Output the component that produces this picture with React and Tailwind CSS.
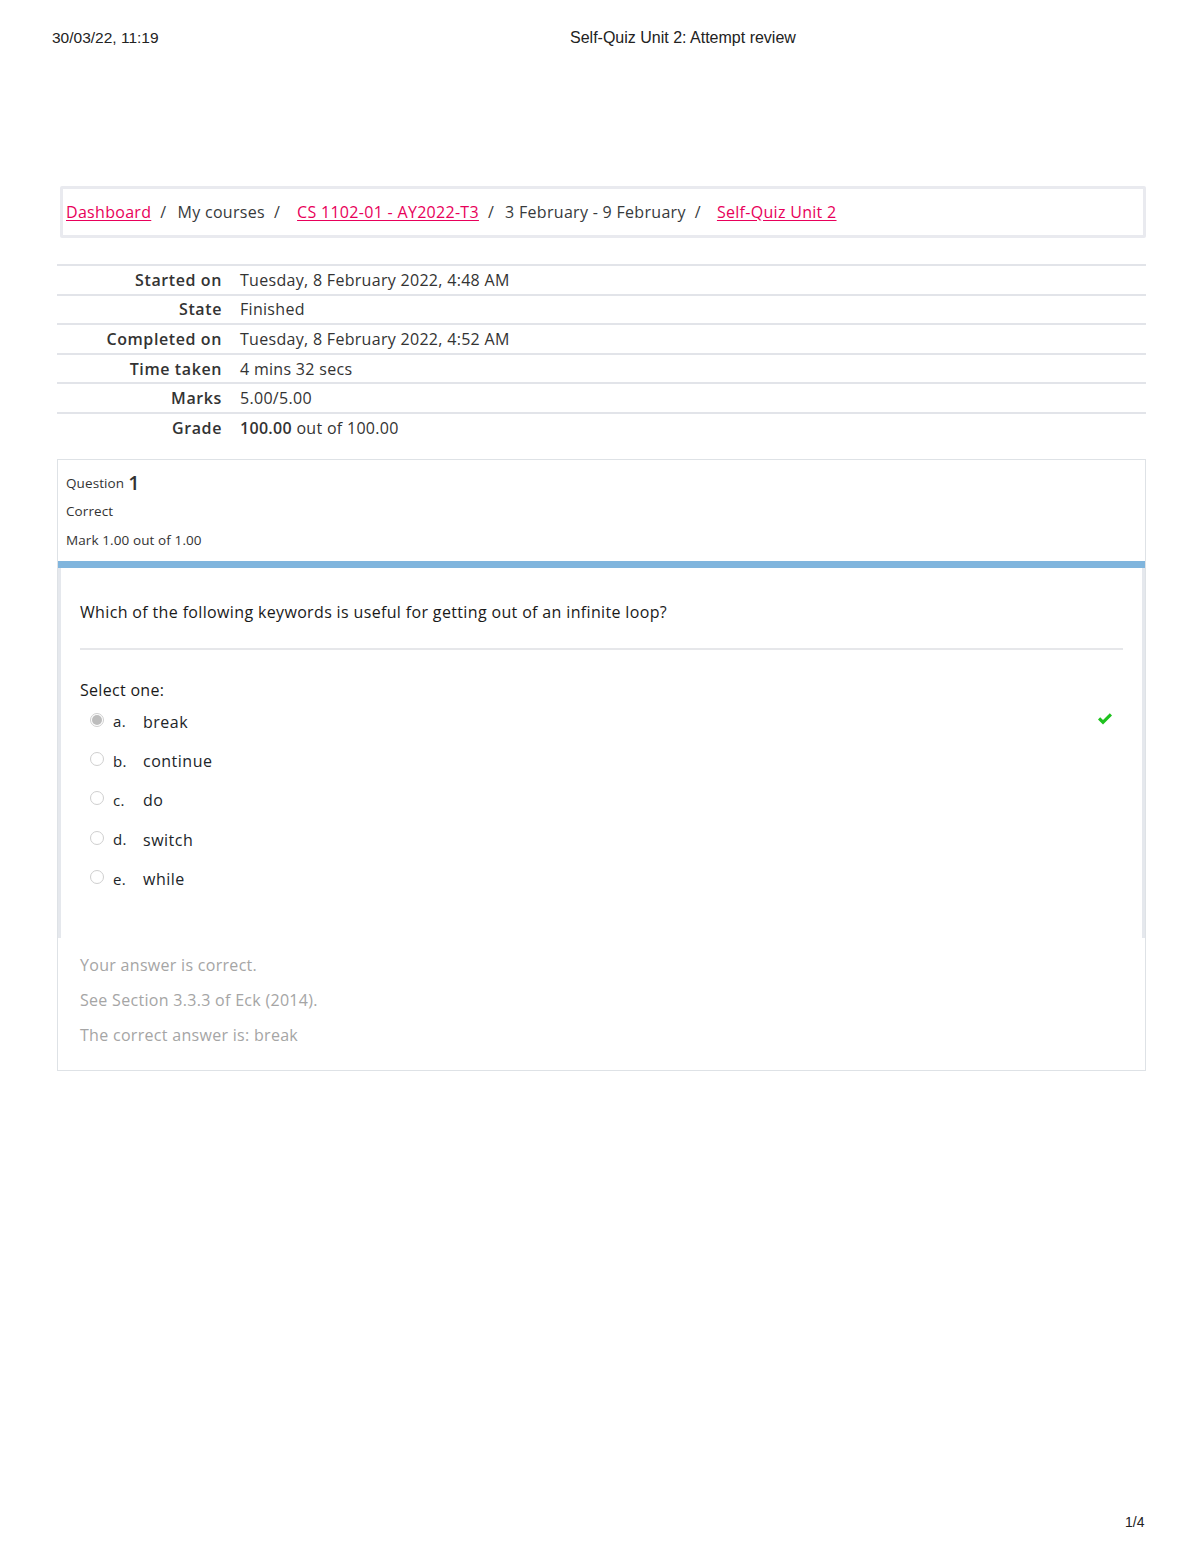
import React from "react";

const font = { fontFamily: '"Open Sans", "Noto Sans", sans-serif' };

const rows = [
  ["Started on", "Tuesday, 8 February 2022, 4:48 AM"],
  ["State", "Finished"],
  ["Completed on", "Tuesday, 8 February 2022, 4:52 AM"],
  ["Time taken", "4 mins 32 secs"],
  ["Marks", "5.00/5.00"],
];

const options = [
  ["a.", "break", true],
  ["b.", "continue", false],
  ["c.", "do", false],
  ["d.", "switch", false],
  ["e.", "while", false],
];

const Crumb = ({ children }) => (
  <a href="#" className="text-[#e8005a] underline underline-offset-2">
    {children}
  </a>
);

const Sep = () => <span className="ml-[9px] mr-[11px] text-[#373a3c]">/</span>;

const Radio = ({ checked }) => (
  <span className="w-[14px] h-[14px] rounded-full border border-[#cfcfcf] bg-white flex items-center justify-center">
    {checked && <span className="w-[10px] h-[10px] rounded-full bg-[#bdbdbd]" />}
  </span>
);

const Check = () => (
  <svg width="16" height="14" viewBox="0 0 16 14" className="text-[#1fc21f]">
    <path
      d="M1 7.5 L3.2 5.3 L6 8.1 L12.8 1.3 L15 3.5 L6 12.5 Z"
      fill="currentColor"
    />
  </svg>
);

export default function App() {
  return (
    <div
      className="w-[1200px] h-[1553px] bg-white relative text-[#212529] tracking-[0.3px]"
      style={font}
    >
      <div
        className="flex h-[76px] items-center text-[#222] tracking-normal"
        style={{ fontFamily: '"Liberation Sans", Arial, sans-serif' }}
      >
        <span className="ml-[52px] w-[518px] text-[15.5px]">30/03/22, 11:19</span>
        <span className="text-[16px]">Self-Quiz Unit 2: Attempt review</span>
      </div>

      <div className="px-[54px] pt-[110px]">
        <div className="ml-[6px] h-[52px] border-[3px] border-[#e9eaef] rounded-[2px] flex items-center px-[3px] pb-[1px] text-[16px] text-[#373a3c]">
          <Crumb>Dashboard</Crumb>
          <Sep />
          <span>My courses</span>
          <Sep />
          <span className="ml-[6px]">
            <Crumb>CS 1102-01 - AY2022-T3</Crumb>
          </span>
          <Sep />
          <span>3 February - 9 February</span>
          <Sep />
          <span className="ml-[5px]">
            <Crumb>Self-Quiz Unit 2</Crumb>
          </span>
        </div>

        <div className="ml-[3px] mt-[26px] border-t-2 border-[#e2e4e9] text-[16px]">
          {rows.map(([label, value]) => (
            <div key={label} className="flex items-center h-[29.6px] border-b-2 border-[#e2e4e9]">
              <span className="w-[165px] text-right font-semibold text-[#333] tracking-[0.6px]">
                {label}
              </span>
              <span className="ml-[18px] text-[#333]">{value}</span>
            </div>
          ))}
          <div className="flex items-center h-[29px] pb-[1px]">
            <span className="w-[165px] text-right font-semibold text-[#333] tracking-[0.6px]">
              Grade
            </span>
            <span className="ml-[18px] text-[#333]">
              <b className="font-semibold">100.00</b> out of 100.00
            </span>
          </div>
        </div>

        <div className="ml-[3px] mt-[16px] border border-[#dee2e6]">
          <div className="px-[8px] pt-[10px] h-[101px] text-[13.5px] text-[#333] tracking-[0.1px]">
            <div className="h-[26px] flex items-center">
              Question <span className="ml-[4px] text-[20px] font-semibold">1</span>
            </div>
            <div className="h-[30px] flex items-center">Correct</div>
            <div className="h-[29px] flex items-center">Mark 1.00 out of 1.00</div>
          </div>
          <div className="h-[7px] bg-[#80b5dd]" />

          <div className="h-[370px] border-x-[3px] border-[#e5e8ed] px-[19px]">
            <div className="pt-[32px] h-[82px] text-[16px] text-[#1a1a1a] tracking-[0.35px] border-b-2 border-[#e6e7ea]">
              Which of the following keywords is useful for getting out of an infinite loop?
            </div>
            <div className="pt-[28px] text-[16px] text-[#1a1a1a]">Select one:</div>
            <div>
              {options.map(([letter, text, correct]) => (
                <div key={letter} className="h-[39.3px] flex items-center">
                  <span className="ml-[10px] -mt-[4px]">
                    <Radio checked={correct} />
                  </span>
                  <span className="ml-[9px] w-[30px] text-[15px] font-medium">{letter}</span>
                  <span className="text-[16px] tracking-[0.5px]">{text}</span>
                  {correct && (
                    <span className="ml-auto mr-[10px] -mt-[6px]">
                      <Check />
                    </span>
                  )}
                </div>
              ))}
            </div>
          </div>

          <div className="px-[22px] pt-[10px] h-[132px] text-[16px] text-[#a5a5a5] tracking-[0.3px]">
            <div className="h-[35px] flex items-center">Your answer is correct.</div>
            <div className="h-[35px] flex items-center">See Section 3.3.3 of Eck (2014).</div>
            <div className="h-[35px] flex items-center">The correct answer is: break</div>
          </div>
        </div>
      </div>

      <div
        className="absolute left-[1125px] top-[1512px] text-[14px] text-[#222] tracking-normal"
        style={{ fontFamily: '"Liberation Sans", Arial, sans-serif' }}
      >
        1/4
      </div>
    </div>
  );
}
